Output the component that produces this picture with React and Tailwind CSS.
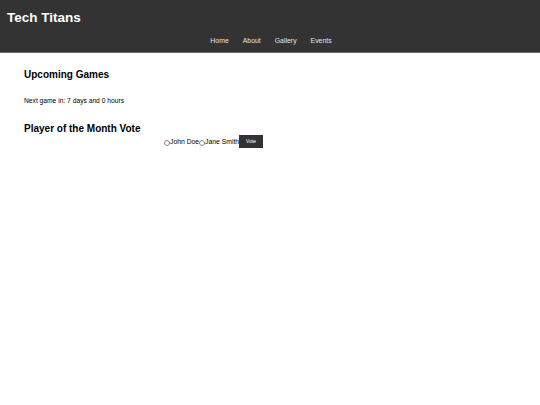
export default function App() {
  const players = ["John Doe", "Jane Smith"];

  return (
    <div className="min-h-[405px] bg-white font-['Liberation_Sans',Arial,sans-serif] text-black">
      <header className="h-[53px] border-b border-[#6b6b6b] bg-[#333333] px-[7px] pt-[9px] text-white">
        <h1 className="text-[13.5px] font-bold leading-[18px]">Tech Titans</h1>
        <nav className="mt-[9px] flex justify-center gap-[14px] pl-[2px] text-[6.9px] leading-[10px] text-[#e6e6e6]">
          <a href="#">Home</a>
          <a href="#">About</a>
          <a href="#">Gallery</a>
          <a href="#">Events</a>
        </nav>
      </header>

      <main className="px-[24px] pt-[15px]">
        <section>
          <h2 className="text-[10px] font-bold leading-[14px]">Upcoming Games</h2>
          <p className="mt-[14px] text-[6.7px] leading-[10px]">Next game in: 7 days and 0 hours</p>
        </section>

        <section className="mt-[16px]">
          <h2 className="text-[10px] font-bold leading-[14px]">Player of the Month Vote</h2>
          <form className="-mt-[1px] flex items-center pl-[140px]" onSubmit={(e) => e.preventDefault()}>
            {players.map((name) => (
              <label key={name} className="flex items-center text-[6.8px] leading-[13px]">
                <input
                  type="radio"
                  name="player"
                  value={name}
                  className="mt-[2px] h-[6px] w-[6px] appearance-none rounded-full border border-[#8a8a8a] bg-white"
                />
                {name}
              </label>
            ))}
            <button type="submit" className="h-[13px] w-[24px] bg-[#333333] text-[5px] text-white">
              Vote
            </button>
          </form>
        </section>
      </main>
    </div>
  );
}
